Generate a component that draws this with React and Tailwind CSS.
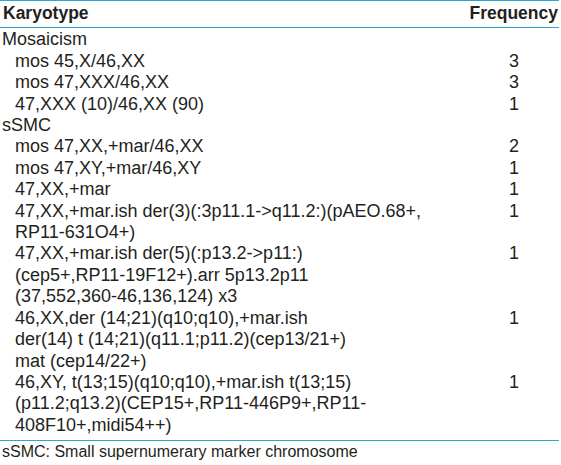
import React from "react";

const rows = [
  { g: true, t: ["Mosaicism"] },
  { t: ["mos 45,X/46,XX"], f: "3" },
  { t: ["mos 47,XXX/46,XX"], f: "3" },
  { t: ["47,XXX (10)/46,XX (90)"], f: "1" },
  { g: true, t: ["sSMC"] },
  { t: ["mos 47,XX,+mar/46,XX"], f: "2" },
  { t: ["mos 47,XY,+mar/46,XY"], f: "1" },
  { t: ["47,XX,+mar"], f: "1" },
  { t: ["47,XX,+mar.ish der(3)(:3p11.1->q11.2:)(pAEO.68+,", "RP11-631O4+)"], f: "1" },
  { t: ["47,XX,+mar.ish der(5)(:p13.2->p11:)", "(cep5+,RP11-19F12+).arr 5p13.2p11", "(37,552,360-46,136,124) x3"], f: "1" },
  { t: ["46,XX,der (14;21)(q10;q10),+mar.ish", "der(14) t (14;21)(q11.1;p11.2)(cep13/21+)", "mat (cep14/22+)"], f: "1" },
  { t: ["46,XY, t(13;15)(q10;q10),+mar.ish t(13;15)", "(p11.2;q13.2)(CEP15+,RP11-446P9+,RP11-", "408F10+,midi54++)"], f: "1" },
];

export default function App() {
  return (
    <div className="w-[561px] h-[465px] bg-white text-[#231f20]" style={{ fontFamily: '"Liberation Sans", Arial, sans-serif' }}>
      <div className="w-[559px]">
        <div className="border-t-[1.5px] border-b-[1.5px] border-[#2aa7d3] grid grid-cols-[1fr_90px] pt-[1.5px] pb-[3px] text-[17.5px] leading-[21.4px] font-bold">
          <div className="pl-[3px]">Karyotype</div>
          <div className="text-right pr-[1px]">Frequency</div>
        </div>
        <div className="pt-[1.5px] pb-[4px] border-b-[1.5px] border-[#2aa7d3] text-[18px] leading-[21.4px]">
          {rows.map((r, i) => (
            <div key={i} className="grid grid-cols-[1fr_90px]">
              <div className={r.g ? "pl-[2px]" : "pl-[15px]"}>
                {r.t.map((l, j) => (
                  <div key={j} className="whitespace-nowrap">{l}</div>
                ))}
              </div>
              <div className="text-center">{r.f || ""}</div>
            </div>
          ))}
        </div>
        <div className="pl-[2px] pt-[1px] text-[16px] leading-[20px]">sSMC: Small supernumerary marker chromosome</div>
      </div>
    </div>
  );
}
